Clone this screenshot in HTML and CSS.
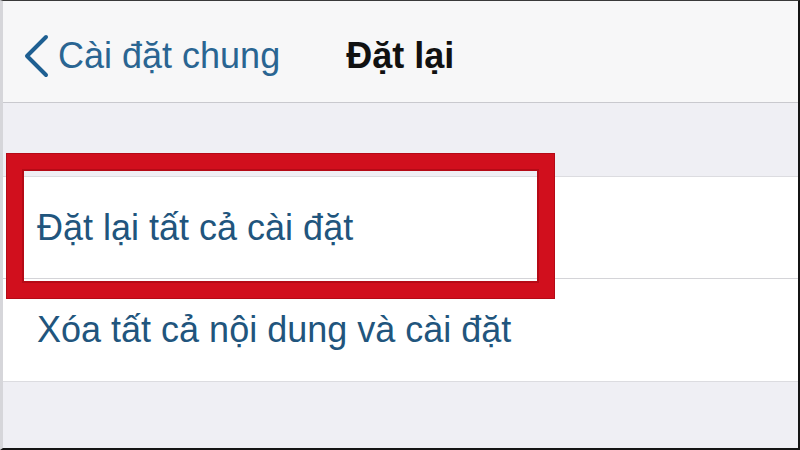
FILE: index.html
```html
<!DOCTYPE html>
<html lang="vi">
<head>
<meta charset="utf-8">
<title>Đặt lại</title>
<link rel="stylesheet" href="styles.css">
</head>
<body>
<div class="screen">
  <header class="navbar">
    <div class="back">
      <svg class="chevron" width="28" height="46" viewBox="0 0 28 46" aria-hidden="true">
        <path d="M24 4 L5 23 L24 42" fill="none" stroke="#1e5f92" stroke-width="4" stroke-linecap="round" stroke-linejoin="round"/>
      </svg>
      <span class="back-label">Cài đặt chung</span>
    </div>
    <h1 class="title">Đặt lại</h1>
  </header>
  <div class="spacer"></div>
  <section class="group">
    <div class="row first">Đặt lại tất cả cài đặt</div>
    <div class="row">Xóa tất cả nội dung và cài đặt</div>
  </section>
  <div class="highlight"></div>
</div>
</body>
</html>
```
FILE: styles.css
```css
html, body {
  margin: 0;
  padding: 0;
  width: 800px;
  height: 450px;
  overflow: hidden;
  background: #111;
}
.screen {
  position: relative;
  box-sizing: border-box;
  width: 800px;
  height: 450px;
  display: flex;
  flex-direction: column;
  background: #efeff4;
  border-left: 3px solid #d6d6da;
  border-right: 2px solid #141414;
  border-bottom: 2px solid #141414;
  border-top: 1px solid #3a3a3a;
  font-family: "Liberation Sans", Arial, sans-serif;
}
.navbar {
  height: 102px;
  box-sizing: border-box;
  background: #f7f7f8;
  border-bottom: 1px solid #c9c9ce;
  display: flex;
  align-items: center;
  padding: 8px 0 0 19px;
}
.back {
  display: flex;
  align-items: center;
  gap: 8px;
}
.chevron {
  display: block;
}
.back-label {
  font-size: 36px;
  color: #2a6592;
}
.title {
  margin: 0 0 0 66px;
  font-size: 36px;
  font-weight: bold;
  color: #111;
}
.spacer {
  height: 73px;
}
.group {
  background: #fff;
  border-top: 1px solid #dcdce0;
  border-bottom: 1px solid #dcdce0;
}
.row {
  height: 102px;
  box-sizing: border-box;
  display: flex;
  align-items: center;
  padding-left: 34px;
  font-size: 36px;
  color: #21557d;
}
.row.first {
  border-bottom: 1px solid #d4d4d8;
}
.highlight {
  position: absolute;
  left: 4px;
  top: 153px;
  width: 547px;
  height: 144px;
  box-sizing: border-box;
  border: 15px solid #d10f1d;
  box-shadow: inset 0 0 0 2px #b50a16, 0 0 0 1px #b50a16;
}
```
